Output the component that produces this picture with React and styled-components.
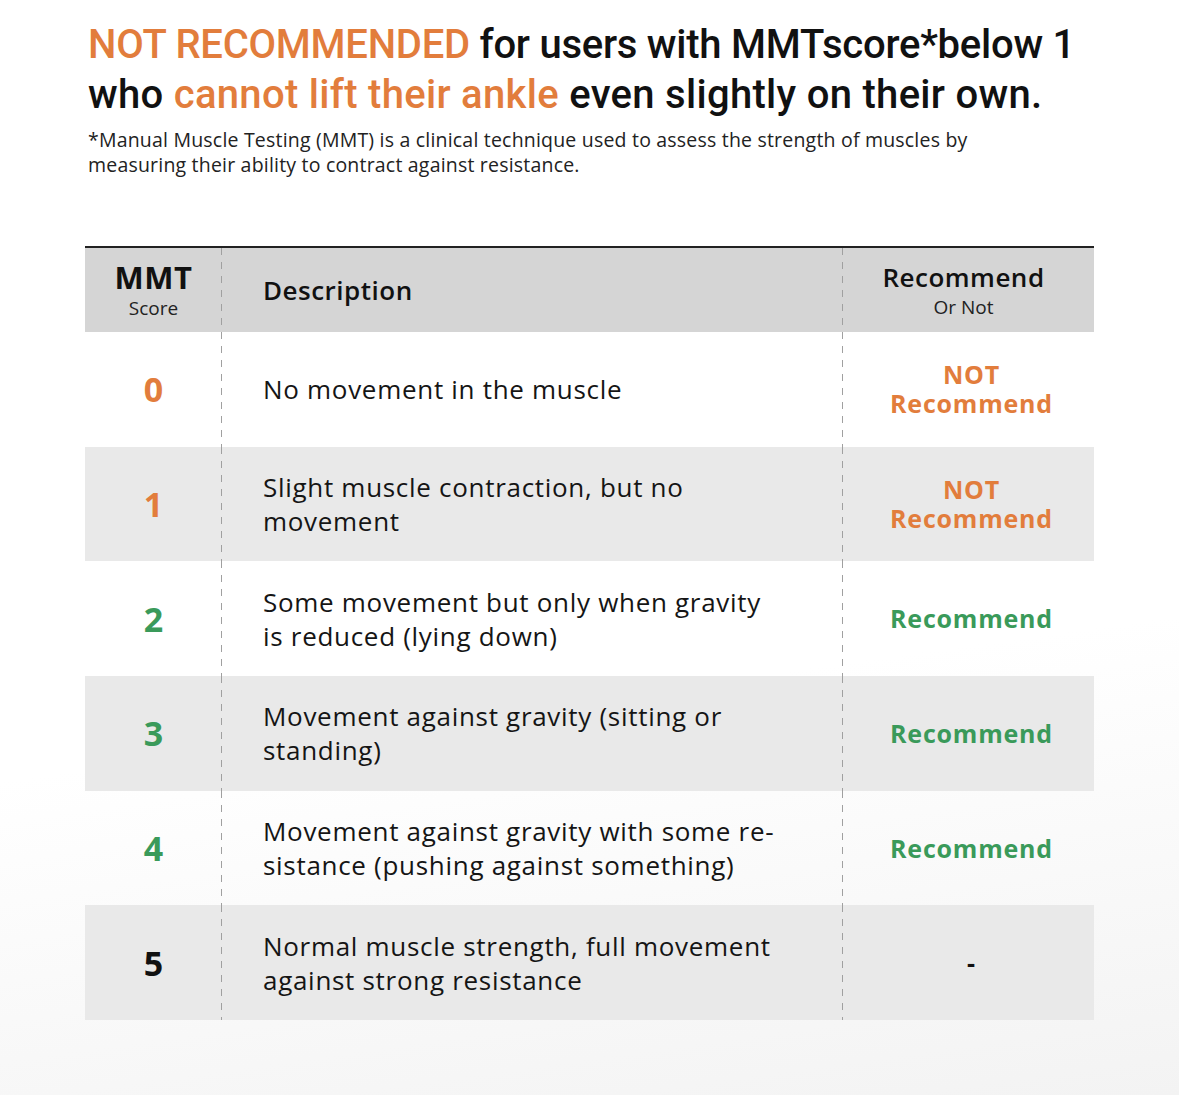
import React from 'react'
import styled, { createGlobalStyle } from 'styled-components'

const ORANGE = '#e27d3c'
const GREEN = '#3a9a5a'

const Global = createGlobalStyle`
  html, body {
    margin: 0;
    padding: 0;
  }
  body {
    background: linear-gradient(172deg, #ffffff 62%, #f3f3f3 100%);
    min-height: 1095px;
    font-family: 'Open Sans', 'Noto Sans', sans-serif;
    color: #111;
  }
`

const rows = [
  { score: 0, desc: 'No movement in the muscle', rec: 'no', shade: false },
  { score: 1, desc: 'Slight muscle contraction, but no movement', rec: 'no', shade: true },
  { score: 2, desc: 'Some movement but only when gravity is reduced (lying down)', rec: 'yes', shade: false },
  { score: 3, desc: 'Movement against gravity (sitting or standing)', rec: 'yes', shade: true },
  { score: 4, desc: 'Movement against gravity with some re-sistance (pushing against something)', rec: 'yes', shade: false },
  { score: 5, desc: 'Normal muscle strength, full movement against strong resistance', rec: 'none', shade: true },
]

export default function App() {
  return (
    <Page>
      <Global />
      <Intro>
        <Headline>
          <Line tight>
            <Hi>NOT RECOMMENDED</Hi> for users with MMTscore*below 1
          </Line>
          <Line>
            who <Hi>cannot lift their ankle</Hi> even slightly on their own.
          </Line>
        </Headline>
        <Note>
          *Manual Muscle Testing (MMT) is a clinical technique used to assess the strength of muscles by
          measuring their ability to contract against resistance.
        </Note>
      </Intro>

      <Table>
        <HeadRow>
          <ScoreCell>
            <HeadBig>MMT</HeadBig>
            <HeadSmall>Score</HeadSmall>
          </ScoreCell>
          <DescCell>
            <HeadTitle>Description</HeadTitle>
          </DescCell>
          <HeadRecCell>
            <HeadTitle>Recommend</HeadTitle>
            <HeadSmall>Or Not</HeadSmall>
          </HeadRecCell>
        </HeadRow>
        {rows.map(r => (
          <Row key={r.score} shade={r.shade}>
            <ScoreCell>
              <Score tone={r.score < 2 ? 'orange' : r.score < 5 ? 'green' : 'dark'}>{r.score}</Score>
            </ScoreCell>
            <DescCell>
              <Desc>{r.desc}</Desc>
            </DescCell>
            <RecCell>
              {r.rec === 'no' && (
                <Rec tone="orange">
                  NOT
                  <br />
                  Recommend
                </Rec>
              )}
              {r.rec === 'yes' && <Rec tone="green">Recommend</Rec>}
              {r.rec === 'none' && <Rec tone="dark">-</Rec>}
            </RecCell>
          </Row>
        ))}
      </Table>
    </Page>
  )
}

const Page = styled.div`
  padding: 20px 0 0 85px;
  width: 1009px;
`

const Intro = styled.div`
  padding-left: 3px;
`

const Headline = styled.h1`
  margin: 0;
  font-family: 'Roboto', 'Open Sans', sans-serif;
  font-weight: 500;
  font-size: 40px;
  line-height: 50px;
  color: #111;
`

const Line = styled.div`
  white-space: nowrap;
  letter-spacing: ${p => (p.tight ? '-0.25px' : '0.3px')};
`

const Hi = styled.span`
  color: ${ORANGE};
`

const Note = styled.p`
  margin: 7px 0 0;
  font-family: 'Open Sans', sans-serif;
  font-size: 19.5px;
  line-height: 25px;
  letter-spacing: 0.2px;
  color: #222;
  width: 925px;
`

const Table = styled.div`
  margin-top: 69px;
  border-top: 2px solid #222;
`

const Row = styled.div`
  display: grid;
  grid-template-columns: 137px 621px 251px;
  height: 114.7px;
  background: ${p => (p.shade ? '#e9e9e9' : 'transparent')};
`

const HeadRow = styled(Row)`
  height: 84px;
  background: #d5d5d5;
`

const Cell = styled.div`
  position: relative;
  display: flex;
  flex-direction: column;
  justify-content: center;
`

const Dashed = styled(Cell)`
  &::after {
    content: '';
    position: absolute;
    top: 0;
    bottom: 0;
    right: 0;
    width: 1px;
    background: repeating-linear-gradient(to bottom, #a0a0a0 0 7px, transparent 7px 14px);
  }
`

const ScoreCell = styled(Dashed)`
  align-items: center;
`

const DescCell = styled(Dashed)`
  padding-left: 41px;
  padding-right: 60px;
`

const RecCell = styled(Cell)`
  align-items: center;
  text-align: center;
  padding-left: 6px;
`

const HeadRecCell = styled(RecCell)`
  padding-left: 0;
  padding-right: 10px;
`

const HeadBig = styled.div`
  font-size: 31px;
  font-weight: 700;
  line-height: 34px;
  letter-spacing: 0.5px;
`

const HeadSmall = styled.div`
  font-size: 19px;
  line-height: 24px;
  margin-top: 2px;
  color: #222;
`

const HeadTitle = styled.div`
  font-size: 26px;
  font-weight: 600;
  line-height: 32px;
  letter-spacing: 0.5px;
`

const toneColor = t => (t === 'orange' ? ORANGE : t === 'green' ? GREEN : '#111')

const Score = styled.div`
  font-size: 34px;
  font-weight: 700;
  color: ${p => toneColor(p.tone)};
`

const Desc = styled.div`
  font-size: 26px;
  font-weight: 500;
  line-height: 34px;
  letter-spacing: 0.7px;
  color: #151515;
`

const Rec = styled.div`
  font-size: 25px;
  font-weight: 700;
  line-height: 29px;
  letter-spacing: 0.8px;
  color: ${p => toneColor(p.tone)};
`
